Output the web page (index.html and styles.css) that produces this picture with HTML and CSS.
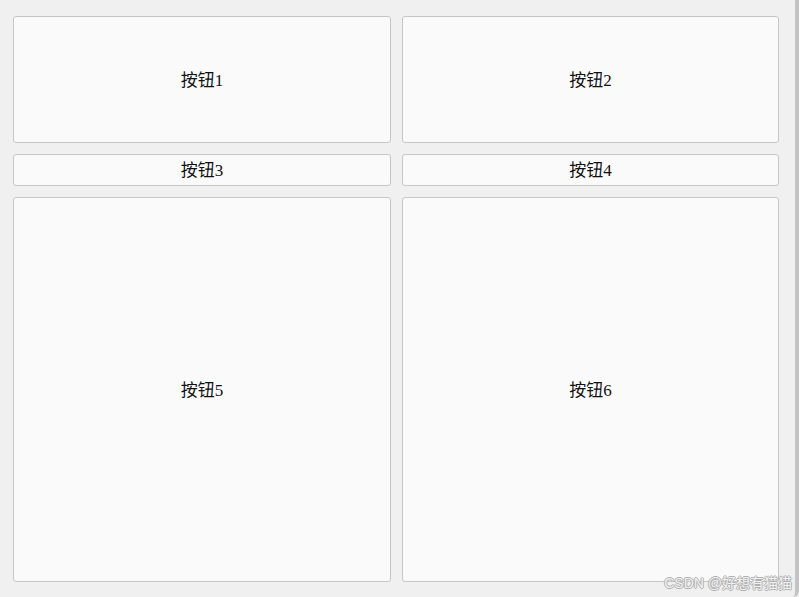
FILE: index.html
```html
<!DOCTYPE html>
<html lang="zh-CN">
<head>
    <meta charset="UTF-8">
    <meta name="viewport" content="width=device-width, initial-scale=1.0">
    <title>Grid Layout</title>
    <link rel="stylesheet" href="styles.css">
</head>
<body>
    <div class="window">
        <div class="grid">
            <button class="btn">按钮1</button>
            <button class="btn">按钮2</button>
            <button class="btn">按钮3</button>
            <button class="btn">按钮4</button>
            <button class="btn">按钮5</button>
            <button class="btn">按钮6</button>
        </div>
        <span class="watermark">CSDN @好想有猫猫</span>
    </div>
</body>
</html>
```

FILE: styles.css
```css
* {
    margin: 0;
    padding: 0;
    box-sizing: border-box;
}

body {
    background: #f0f0f0;
    overflow: hidden;
}

.window {
    position: relative;
    height: 100vh;
    border-right: 4px solid #c3c3c3;
    border-bottom-right-radius: 6px;
    padding: 16px 16px 15px 13px;
}

.grid {
    display: grid;
    grid-template-columns: 378px 377px;
    grid-template-rows: 127px 32px 1fr;
    gap: 11px 11px;
    height: 100%;
}

.btn {
    background: #fafafa;
    border: 1px solid #c6c6c6;
    border-radius: 3px;
    padding-bottom: 3px;
    font-family: "Liberation Serif", "Noto Sans CJK SC", serif;
    font-size: 17px;
    color: #111;
    cursor: pointer;
}

.watermark {
    position: absolute;
    right: 3px;
    bottom: 5px;
    font-family: "Liberation Sans", "Noto Sans CJK SC", sans-serif;
    font-size: 14px;
    color: #f2f2f2;
    text-shadow: 1px 0 0 #b0b0b0, -1px 0 0 #b0b0b0, 0 1px 0 #b0b0b0, 0 -1px 0 #b0b0b0;
}
```
